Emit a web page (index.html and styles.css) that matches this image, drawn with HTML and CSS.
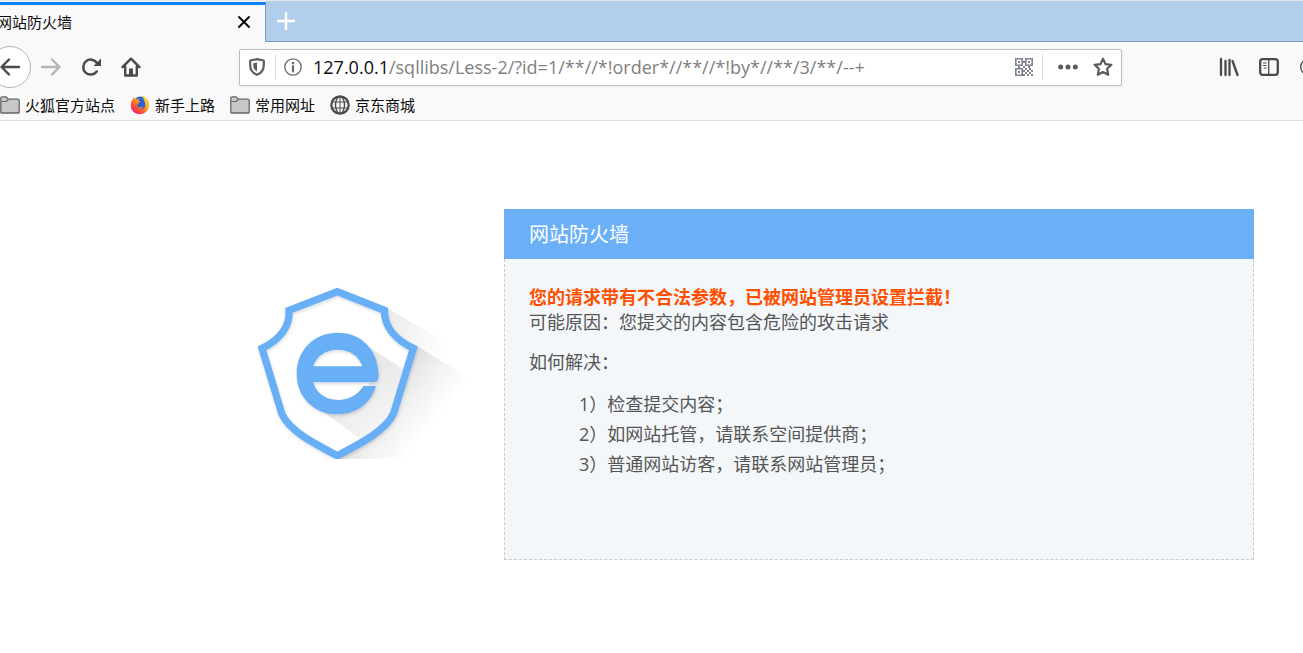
FILE: index.html
```html
<!DOCTYPE html>
<html lang="zh-CN">
<head>
    <meta charset="UTF-8">
    <meta name="viewport" content="width=device-width, initial-scale=1.0">
    <title>网站防火墙</title>
    <link rel="stylesheet" href="styles.css">
</head>
<body>
    <header class="browser">
        <div class="tabs">
            <div class="tab">
                <span class="tab-title">网站防火墙</span>
                <button class="tab-close" aria-label="关闭标签页">
                    <svg width="14" height="14" viewBox="0 0 14 14"><path d="M2 2l10 10M12 2L2 12" stroke="#0c0c0d" stroke-width="2" stroke-linecap="round"/></svg>
                </button>
            </div>
            <button class="new-tab" aria-label="新建标签页">
                <svg width="18" height="18" viewBox="0 0 18 18"><path d="M9 1v16M1 9h16" stroke="#fff" stroke-width="2.400" stroke-linecap="round"/></svg>
            </button>
        </div>

        <nav class="toolbar">
            <button class="tool back" aria-label="后退">
                <svg width="20" height="20" viewBox="0 0 20 20"><path d="M9 2.500L1.500 10L9 17.500M2 10h17" fill="none" stroke="#4a4a4b" stroke-width="2.400" stroke-linecap="round" stroke-linejoin="round"/></svg>
            </button>
            <button class="tool" aria-label="前进" disabled>
                <svg width="20" height="20" viewBox="0 0 20 20"><path d="M11 2.500L18.500 10L11 17.500M18 10H1" fill="none" stroke="#b5b5b5" stroke-width="2.400" stroke-linecap="round" stroke-linejoin="round"/></svg>
            </button>
            <button class="tool" aria-label="刷新">
                <svg width="20" height="20" viewBox="0 0 20 20"><path d="M15.800 14.500A7.500 7.500 0 1 1 16 6" fill="none" stroke="#4a4a4b" stroke-width="2.500" stroke-linecap="round"/><path d="M20 1.500V9H12.500z" fill="#4a4a4b"/></svg>
            </button>
            <button class="tool" aria-label="主页">
                <svg width="20" height="20" viewBox="0 0 20 20"><path d="M1.500 10.200L10 1.700l8.500 8.500M4.200 9.500V18.500h11.600V9.500" fill="none" stroke="#4a4a4b" stroke-width="2.400" stroke-linecap="round" stroke-linejoin="round"/><path d="M8 18v-6.500h4V18z" fill="#4a4a4b"/></svg>
            </button>

            <div class="urlbar">
                <button class="url-icon" aria-label="跟踪保护">
                    <svg width="18" height="18" viewBox="0 0 18 18"><path d="M9 1.200l6.800 1.300v4.500c0 5-2.800 8.300-6.800 9.800C5 15.300 2.200 12 2.200 7V2.500z" fill="none" stroke="#5e5e5f" stroke-width="2.200" stroke-linejoin="round"/><path d="M9 4.500v9C6.500 12.200 5.300 10 5.300 7.200V5.200z" fill="#5e5e5f"/></svg>
                </button>
                <span class="separator"></span>
                <button class="url-icon" aria-label="站点信息">
                    <svg width="18" height="18" viewBox="0 0 18 18"><circle cx="9" cy="9" r="8.200" fill="none" stroke="#6a6a6b" stroke-width="1.300"/><circle cx="9" cy="5" r="1.300" fill="#6a6a6b"/><path d="M9 8v5.500" stroke="#6a6a6b" stroke-width="2.200" stroke-linecap="round"/></svg>
                </button>
                <label class="url-host" for="url">127.0.0.1</label>
                <input class="url-path" id="url" type="text" value="/sqllibs/Less-2/?id=1/**//*!order*//**//*!by*//**/3/**/--+">
                <button class="url-icon" aria-label="二维码">
                    <svg width="18" height="18" viewBox="0 0 18 18"><g fill="none" stroke="#7d8390" stroke-width="1.600"><path d="M.8.8h6.400v6.400H.8zM10.800.8h6.400v6.400h-6.400zM.8 10.800h6.400v6.400H.8z"/></g><path d="M3 3h2v2H3zM13 3h2v2h-2zM3 13h2v2H3zM8 3h2v2H8zM8 8h2v2H8zM3 8h2v2H3zM13 8h2v2h-2zM10 10h2v2h-2zM14 10h2v2h-2zM8 12h2v2H8zM12 12h2v2h-2zM16 12h2v2h-2zM10 14h2v2h-2zM14 14h2v2h-2zM8 16h2v2H8zM12 16h2v2h-2zM16 16h2v2h-2z" fill="#7d8390"/></svg>
                </button>
                <span class="separator"></span>
                <button class="url-icon page-actions" aria-label="页面操作">
                    <svg width="20" height="6" viewBox="0 0 20 6"><g fill="#5a5a5b"><circle cx="2.700" cy="3" r="2.500"/><circle cx="10" cy="3" r="2.500"/><circle cx="17.300" cy="3" r="2.500"/></g></svg>
                </button>
                <button class="url-icon" aria-label="添加书签">
                    <svg width="20" height="20" viewBox="0 0 20 20"><path d="M10 1.800l2.500 5.300 5.900.7-4.300 4 1.100 6L10 15l-5.200 2.800 1.100-6-4.300-4 5.900-.7z" fill="none" stroke="#5a5a5b" stroke-width="2.200" stroke-linejoin="round"/></svg>
                </button>
            </div>

            <button class="tool" aria-label="我的足迹">
                <svg width="20" height="20" viewBox="0 0 20 20"><path d="M2 2v16M6.500 4v14M10.500 3v15M13.500 4l5 14" stroke="#4a4a4b" stroke-width="2.300" stroke-linecap="round"/></svg>
            </button>
            <button class="tool" aria-label="侧栏">
                <svg width="20" height="20" viewBox="0 0 20 20"><rect x="1.200" y="2.200" width="17.600" height="15.600" rx="2.500" fill="none" stroke="#4a4a4b" stroke-width="2.300"/><path d="M9.700 3v14" stroke="#4a4a4b" stroke-width="1.300"/><path d="M4 6h3.500M4 8.500h3.500M4.800 11h2.700" stroke="#4a4a4b" stroke-width="1.200"/></svg>
            </button>
            <button class="tool account" aria-label="账户">
                <svg width="20" height="20" viewBox="0 0 20 20"><circle cx="10" cy="10" r="8.300" fill="none" stroke="#4a4a4b" stroke-width="1.400"/></svg>
            </button>
        </nav>

        <nav class="bookmarks">
            <a class="bookmark" href="#">
                <svg width="20" height="20" viewBox="0 0 20 20"><path d="M.8 17.200V3.500q0-1.700 1.700-1.700h3.700l2 2.400h9.300q1.700 0 1.700 1.700v11.300q0 .8-.8.8H1.600q-.8 0-.8-.8z" fill="#c8c8ca" stroke="#656566" stroke-width="1.300"/><path d="M1.500 6.500h4.700l2-1.700" fill="none" stroke="#656566" stroke-width="1.200"/></svg>
                火狐官方站点
            </a>
            <a class="bookmark" href="#">
                <svg width="20" height="20" viewBox="0 0 20 20">
                    <defs>
                        <linearGradient id="fox" x1="1" y1="0" x2="0.200" y2="1">
                            <stop offset="0" stop-color="#fff04a"/>
                            <stop offset="0.400" stop-color="#ffb01f"/>
                            <stop offset="0.700" stop-color="#ff5a2f"/>
                            <stop offset="1" stop-color="#e8127f"/>
                        </linearGradient>
                    </defs>
                    <circle cx="10.500" cy="9" r="7.500" fill="#2a63d6"/>
                    <path d="M13 .5c2.500 1.500 3.700 3.300 4 5 .4-.6.400-1.200.3-1.800 1.500 2 2 4.300 1.700 6.800-.5 5-4.200 8.700-9 8.700C4.500 19.200.8 15.300.8 10.500c0-3 .9-5 2-6.300.1-.9.600-1.800 1.200-2.200 0 .7.200 1.300.6 1.700 1-.2 1.800 0 2.600.5.700-.6 1.500-1 2.300-1-.8.800-1 1.500-1 2.200.7.700 1.700.5 1.700 1.100-.2 1-1.600 1-2 1.900.1 1.500-1.200 1.200-1.200 2.300.8 1.900 3 2 4.300 1.200 1.200-.6 1.900 0 1.600.5-.8 1.600-2.600 2-3.900 1.900 3.500 1.200 6.700-1.300 6.200-5.300C15 5.500 12.400 4 13 .5z" fill="url(#fox)"/>
                </svg>
                新手上路
            </a>
            <a class="bookmark" href="#">
                <svg width="20" height="20" viewBox="0 0 20 20"><path d="M.8 17.200V3.500q0-1.700 1.700-1.700h3.700l2 2.400h9.300q1.700 0 1.700 1.700v11.300q0 .8-.8.8H1.600q-.8 0-.8-.8z" fill="#c8c8ca" stroke="#656566" stroke-width="1.300"/><path d="M1.500 6.500h4.700l2-1.700" fill="none" stroke="#656566" stroke-width="1.200"/></svg>
                常用网址
            </a>
            <a class="bookmark" href="#">
                <svg width="20" height="20" viewBox="0 0 20 20"><g fill="none" stroke="#4a4a4b"><circle cx="10" cy="10" r="8.700" stroke-width="2.200"/><ellipse cx="10" cy="10" rx="4.500" ry="8.500" stroke-width="1.400"/><path d="M10 1v18M2 7h16M2 13h16" stroke-width="1"/></g></svg>
                京东商城
            </a>
        </nav>
    </header>

    <main class="page">
        <svg class="logo" width="220" height="174" viewBox="30 45 660 522" role="img" aria-label="网站防火墙">
            <defs>
                <linearGradient id="upper" gradientUnits="userSpaceOnUse" x1="450" y1="140" x2="620" y2="240">
                    <stop offset="0" stop-color="#ececec"/>
                    <stop offset="1" stop-color="#fff"/>
                </linearGradient>
                <linearGradient id="lower" gradientUnits="userSpaceOnUse" x1="470" y1="290" x2="620" y2="410">
                    <stop offset="0" stop-color="#dcdcdc"/>
                    <stop offset="0.500" stop-color="#f1f1f1"/>
                    <stop offset="1" stop-color="#fff"/>
                </linearGradient>
                <linearGradient id="inner" gradientUnits="userSpaceOnUse" x1="360" y1="330" x2="470" y2="470">
                    <stop offset="0" stop-color="#e8e8e8"/>
                    <stop offset="1" stop-color="#f7f7f7"/>
                </linearGradient>
                <filter id="soft" x="-10%" y="-10%" width="120%" height="120%">
                    <feDropShadow dx="2" dy="5" stdDeviation="5" flood-color="#000" flood-opacity="0.150"/>
                </filter>
            </defs>
            <path d="M443 115L680 255V340L532 229L430 180z" fill="url(#upper)"/>
            <path d="M532 229L690 326V567H292L430 480z" fill="url(#lower)"/>
            <path d="M292 65L147 121C151 170 118 210 66 235L125 430C145 480 220 520 292 557C364 520 439 480 461 430L520 235C466 210 433 170 433 121z" fill="#fff"/>
            <path d="M382 228L504 307L461 430C445 475 410 495 365 510L245 422z" fill="url(#inner)"/>
            <path d="M292 65L147 121C151 170 118 210 66 235L125 430C145 480 220 520 292 557C364 520 439 480 461 430L520 235C466 210 433 170 433 121z" fill="none" stroke="#68aff6" stroke-width="22" filter="url(#soft)"/>
            <circle cx="293" cy="311" r="100" fill="#fff"/>
            <path d="M220 337H400Q416 337 416 318C416 240 365 188 293 188C222 188 170 240 170 311C170 382 222 433 293 433C348 433 393 400 408 348H370C355 374 327 390 293 390C258 390 229 370 220 337zM220 289C229 258 258 239 293 239C329 239 357 258 367 289z" fill="#68aff6" fill-rule="evenodd" filter="url(#soft)"/>
        </svg>

        <section class="panel">
            <h1 class="panel-title">网站防火墙</h1>
            <div class="panel-body">
                <p class="warning">您的请求带有不合法参数，已被网站管理员设置拦截！</p>
                <p>可能原因：您提交的内容包含危险的攻击请求</p>
                <p class="how">如何解决：</p>
                <ul class="steps">
                    <li>1）检查提交内容；</li>
                    <li>2）如网站托管，请联系空间提供商；</li>
                    <li>3）普通网站访客，请联系网站管理员；</li>
                </ul>
            </div>
        </section>
    </main>
</body>
</html>
```
FILE: styles.css
```css
body {
    margin: 0;
    background: #fff;
    color: #555;
    font-family: "Open Sans", "Noto Sans CJK SC", sans-serif;
    overflow-x: hidden;
}

button {
    display: flex;
    align-items: center;
    justify-content: center;
    padding: 0;
    border: none;
    background: none;
    cursor: pointer;
}

/* Browser chrome */
.browser {
    background: #f9f9fa;
    border-bottom: 1px solid #dedede;
    color: #0c0c0d;
    font-size: 15px;
    overflow: hidden;
}

.tabs {
    display: flex;
    height: 40px;
    border-top: 1px solid #e6e6e6;
    background: #b1cfec;
    box-shadow: inset 0 -1px #7d9cbb;
    padding-bottom: 1px;
}

.tab {
    display: flex;
    align-items: center;
    justify-content: space-between;
    box-sizing: border-box;
    width: 266px;
    height: 40px;
    margin-top: 1px;
    padding: 0 14px 3px 0;
    border-top: 3px solid #0a84ff;
    border-right: 1px solid #7d9cbb;
    background: #f9f9fa;
    box-shadow: 0 -1px #f0f0f0;
}

.tab-title {
    margin-left: -3px;
    line-height: 20px;
}

.new-tab {
    width: 40px;
}

.toolbar {
    display: flex;
    align-items: center;
    height: 50px;
    margin-right: -26px;
}

.tool {
    flex: none;
    width: 40px;
    height: 40px;
}

.back {
    box-sizing: border-box;
    width: 42px;
    height: 42px;
    margin-left: -11px;
    border: 1px solid #b5b5b5;
    border-radius: 50%;
    background: #fff;
}

.urlbar {
    display: flex;
    flex: 1;
    align-items: center;
    height: 35px;
    margin: 0 87px 0 88px;
    border: 1px solid #bdbdbd;
    border-radius: 2px;
    background: #fff;
    box-shadow: 0 1px 4px rgba(0, 0, 0, 0.05);
    font-size: 18px;
}

.url-icon {
    flex: none;
    width: 35px;
    height: 35px;
    padding-right: 2px;
}

.separator {
    width: 1px;
    height: 26px;
    background: #dcdcdc;
}

.url-host {
    margin-left: 2px;
    color: #0c0c0d;
}

.url-path {
    flex: 1;
    min-width: 0;
    padding: 0;
    border: none;
    outline: none;
    background: none;
    color: #808080;
    font: inherit;
}

.page-actions {
    margin-left: 8px;
}

.bookmarks {
    display: flex;
    gap: 15px;
    height: 26px;
    padding-bottom: 2px;
}

.bookmark {
    display: flex;
    align-items: center;
    gap: 5px;
    color: #0c0c0d;
    line-height: 20px;
    text-decoration: none;
    white-space: nowrap;
}

/* Blocked page */
.page {
    display: flex;
    align-items: flex-start;
    justify-content: flex-end;
    gap: 34px;
    padding: 88px 49px 40px;
}

.logo {
    flex: none;
    margin-top: 76px;
}

.panel {
    flex: 0 1 750px;
    font-size: 18px;
    line-height: 25px;
}

.panel-title {
    margin: 0;
    padding: 2px 25px 0;
    background: #6bb0f7;
    color: #fff;
    font-size: 20px;
    font-weight: normal;
    line-height: 48px;
}

.panel-body {
    padding: 26px 24px 80px;
    border: 1px dashed #c8cdd0;
    border-top: none;
    background: #f3f7fa;
}

.panel-body p {
    margin: 0;
}

.panel-body .warning {
    color: #ff5000;
    font-weight: bold;
}

.panel-body .how {
    margin-top: 15px;
}

.steps {
    margin: 14px 0 0;
    padding-left: 50px;
    line-height: 30px;
    list-style: none;
}
```
